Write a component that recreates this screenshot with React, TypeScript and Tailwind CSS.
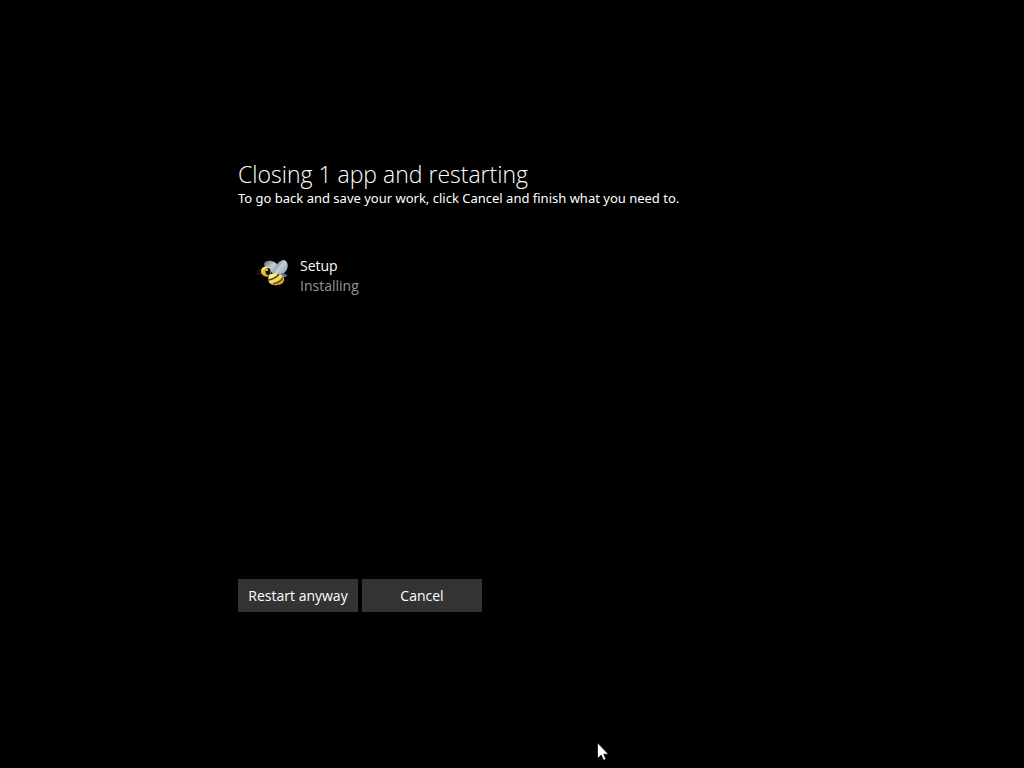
import { useState } from "react";

const apps = [{ name: "Setup", status: "Installing" }];

function BeeIcon() {
  return (
    <svg viewBox="-1 -3 32 32" className="w-8 h-8 shrink-0" aria-hidden="true">
      <defs>
        <linearGradient id="wing" x1="0" y1="0" x2="1" y2="1">
          <stop offset="0" stopColor="#59636f" />
          <stop offset="0.45" stopColor="#c3ccd8" />
          <stop offset="1" stopColor="#7f93b0" />
        </linearGradient>
        <linearGradient id="body" x1="0" y1="0" x2="1" y2="1">
          <stop offset="0" stopColor="#fff6b0" />
          <stop offset="0.6" stopColor="#f0d650" />
          <stop offset="1" stopColor="#b5831c" />
        </linearGradient>
      </defs>
      {/* wings */}
      <path d="M18 15C10 12 5 6 8 3C12 0 20 2 22 9L20 15Z" fill="url(#wing)" />
      <path d="M18 15C17 8 21 2 26 1C31 1 32 8 29 12C26 16 21 17 18 15Z" fill="url(#wing)" />
      <path d="M24 15C27 14 30 15 30 17C28 19 25 18 24 15Z" fill="#5474a4" />
      {/* body with its stripes */}
      <path d="M12 16C16 13 24 14 27 18C28 23 25 26 20 26C15 27 9 24 12 16Z" fill="url(#body)" />
      <path d="M11 21C15 21 20 18 22 15" fill="none" stroke="#54401a" strokeWidth="1.5" />
      <path d="M16 25C20 24 25 22 26 18" fill="none" stroke="#6b4d16" strokeWidth="1.5" />
      {/* head */}
      <circle cx="9" cy="12.500" r="5" fill="#e5c736" />
      <path d="M5 11C6 8 10 8 12 10" fill="none" stroke="#fff3a0" strokeWidth="1.5" />
      <ellipse cx="11" cy="12.500" rx="2.500" ry="3.500" fill="#171310" />
      <circle cx="10" cy="11" r="1" fill="#f2f2e8" />
      <path d="M5 15C7 17 9 18 12 17" fill="none" stroke="#a56f1b" strokeWidth="1" />
      <path d="M4 11L0 12M4 14L0 15" fill="none" stroke="#3a330f" strokeWidth="1" />
    </svg>
  );
}

export default function App() {
  const [choice, setChoice] = useState("");

  return (
    <main
      className="min-h-screen bg-black px-6 pt-40 pb-10 text-white font-['Open_Sans','Noto_Sans',sans-serif]"
      data-choice={choice}
    >
      <div className="max-w-[548px] mx-auto">
        <h1 className="text-[23px] leading-7 font-light">Closing 1 app and restarting</h1>
        <p className="text-[13px] leading-5 font-['Noto_Sans',sans-serif]">
          To go back and save your work, click Cancel and finish what you need to.
        </p>

        <ul className="mt-12 px-[18px] min-h-[323px]">
          {apps.map((app) => (
            <li key={app.name} className="flex items-start gap-3 text-sm leading-5">
              <BeeIcon />
              <div>
                <div>{app.name}</div>
                <div className="text-[#969696]">{app.status}</div>
              </div>
            </li>
          ))}
        </ul>

        <div className="flex gap-1">
          <button
            type="button"
            onClick={() => setChoice("restart")}
            className="w-[120px] h-[33px] bg-[#333333] hover:bg-[#4a4a4a] text-sm whitespace-nowrap"
          >
            Restart anyway
          </button>
          <button
            type="button"
            onClick={() => setChoice("cancel")}
            className="w-[120px] h-[33px] bg-[#333333] hover:bg-[#4a4a4a] text-sm"
          >
            Cancel
          </button>
        </div>
      </div>

      {/* mouse pointer */}
      <svg
        viewBox="0 0 12 19"
        className="absolute left-[597px] top-[742px] w-3 h-[19px] pointer-events-none"
        aria-hidden="true"
      >
        <path
          d="M0.500 0.800V16.500L4.200 13L6.600 18.300L9 17.200L6.700 12.200H11.500Z"
          fill="#ffffff"
          stroke="#000000"
          strokeWidth="0.700"
        />
      </svg>
    </main>
  );
}
